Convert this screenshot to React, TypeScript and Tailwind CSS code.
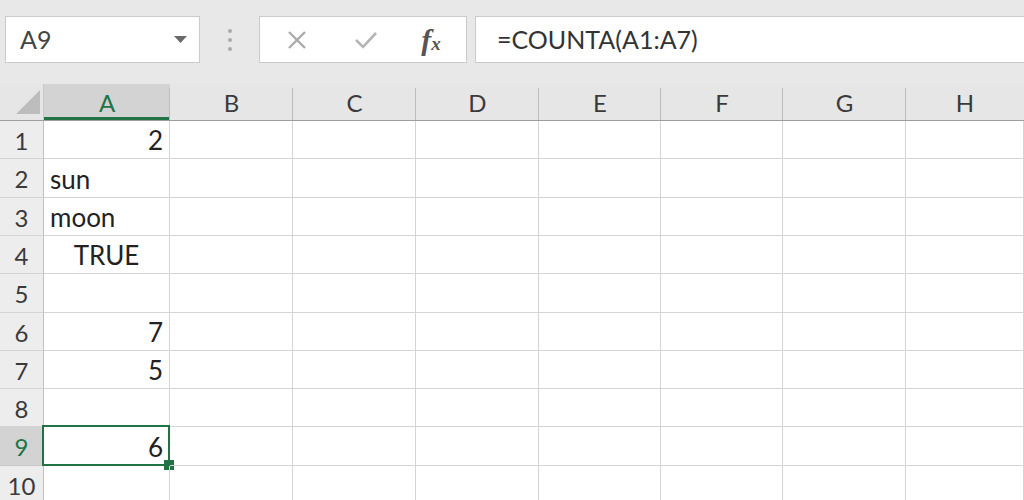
import React from "react";

const colWidths = [126, 123, 123, 123, 122, 122, 123];
const cols = ["A", "B", "C", "D", "E", "F", "G", "H"];
const rowHeights = [38, 39, 38, 38, 39, 38, 38, 38, 39, 38];

type Cell = { text: string; align: "left" | "right" | "center" } | null;
const aData: Cell[] = [
  { text: "2", align: "right" },
  { text: "sun", align: "left" },
  { text: "moon", align: "left" },
  { text: "TRUE", align: "center" },
  null,
  { text: "7", align: "right" },
  { text: "5", align: "right" },
  null,
  { text: "6", align: "right" },
  null,
];

function colW(i: number): React.CSSProperties {
  return i < colWidths.length ? { width: colWidths[i] } : { flex: 1 };
}

export default function App() {
  return (
    <div
      className="w-[1024px] h-[500px] overflow-hidden bg-white text-[#333]"
      style={{ fontFamily: "Lato, 'Noto Sans', sans-serif" }}
    >
      {/* Formula bar */}
      <div className="h-[84px] bg-[#e8e8e8] flex items-start pt-[16px] pl-[5px]">
        <div className="w-[195px] h-[47px] bg-white border border-[#cbcbcb] flex items-center justify-between pl-[14px] pr-[12px]">
          <span className="text-[25px] text-[#444] leading-none">A9</span>
          <svg width="13" height="8" viewBox="0 0 13 8">
            <polygon points="0,0 13,0 6.5,7" fill="#6a6a6a" />
          </svg>
        </div>
        <div className="w-[59px] h-[47px] flex flex-col items-center justify-center gap-[5px]">
          <div className="w-[4px] h-[4px] rounded-full bg-[#a9a9a9]" />
          <div className="w-[4px] h-[4px] rounded-full bg-[#a9a9a9]" />
          <div className="w-[4px] h-[4px] rounded-full bg-[#a9a9a9]" />
        </div>
        <div className="w-[208px] h-[47px] bg-white border border-[#cbcbcb] flex items-center">
          <div className="w-[72px] flex justify-center pl-[2px]">
            <svg width="22" height="22" viewBox="0 0 22 22">
              <path d="M3 3 L19 19 M19 3 L3 19" stroke="#aaaaaa" strokeWidth="2.4" fill="none" />
            </svg>
          </div>
          <div className="w-[68px] flex justify-center">
            <svg width="26" height="22" viewBox="0 0 26 22">
              <path d="M3 11 L10 18 L23 4" stroke="#b5b5b5" strokeWidth="2.6" fill="none" />
            </svg>
          </div>
          <div className="flex-1 flex justify-center pr-[4px]">
            <span
              className="italic text-[#555] text-[30px] leading-none font-bold"
              style={{ fontFamily: "'Liberation Serif', serif" }}
            >
              f<span className="text-[19px]">x</span>
            </span>
          </div>
        </div>
        <div className="ml-[8px] flex-1 h-[47px] bg-white border-y border-l border-[#cbcbcb] flex items-center pl-[21px]">
          <span className="text-[25px] text-[#333] leading-none">=COUNTA(A1:A7)</span>
        </div>
      </div>

      {/* Column headers */}
      <div className="h-[37px] flex bg-[#e6e6e6] border-b border-[#9e9e9e]">
        <div className="w-[44px] relative border-r border-[#c8c8c8]">
          <svg className="absolute left-[16px] top-[6px]" width="24" height="24" viewBox="0 0 24 24">
            <polygon points="24,0 24,24 0,24" fill="#bdbdbd" />
          </svg>
        </div>
        {cols.map((c, i) => (
          <div
            key={c}
            style={colW(i)}
            className={
              "relative flex items-center justify-center pt-[2px] text-[24px] leading-none " +
              (i === 0 ? "bg-[#d3d3d3] text-[#217346]" : "text-[#3a3a3a]")
            }
          >
            {c}
            {i === 0 && <div className="absolute left-0 right-0 bottom-0 h-[3px] bg-[#217346]" />}
            {i > 0 && <div className="absolute left-[-1px] top-[4px] bottom-0 w-px bg-[#bdbdbd]" />}
          </div>
        ))}
      </div>

      {/* Rows */}
      {rowHeights.map((h, r) => {
        const sel = r === 8;
        const cell = aData[r];
        return (
          <div key={r} className="flex" style={{ height: h }}>
            <div
              className={
                "w-[44px] shrink-0 flex items-center justify-center pt-[2px] text-[24px] leading-none border-b border-r " +
                (sel
                  ? "bg-[#d3d3d3] text-[#217346] border-b-[#c8c8c8] border-r-[#217346]"
                  : "bg-[#ededed] text-[#3a3a3a] border-b-[#d4d4d4] border-r-[#c0c0c0]")
              }
            >
              {r + 1}
            </div>
            {cols.map((c, i) => (
              <div
                key={c}
                style={colW(i)}
                className={
                  "relative shrink-0 border-b border-r border-[#d4d4d4] flex items-end pb-[5px] px-[6px] text-[26px] leading-none text-[#222] " +
                  (i === 0 && cell
                    ? cell.align === "right"
                      ? "justify-end"
                      : cell.align === "center"
                      ? "justify-center"
                      : "justify-start"
                    : "")
                }
              >
                {i === 0 && cell ? cell.text : null}
                {i === 0 && sel && (
                  <div className="absolute left-[-2px] top-[-2px] right-[-1px] bottom-[-1px] border-[2px] border-[#217346] pointer-events-none">
                    <div className="absolute right-[-6px] bottom-[-6px] w-[10px] h-[10px] bg-[#217346]" />
                  </div>
                )}
              </div>
            ))}
          </div>
        );
      })}
    </div>
  );
}
